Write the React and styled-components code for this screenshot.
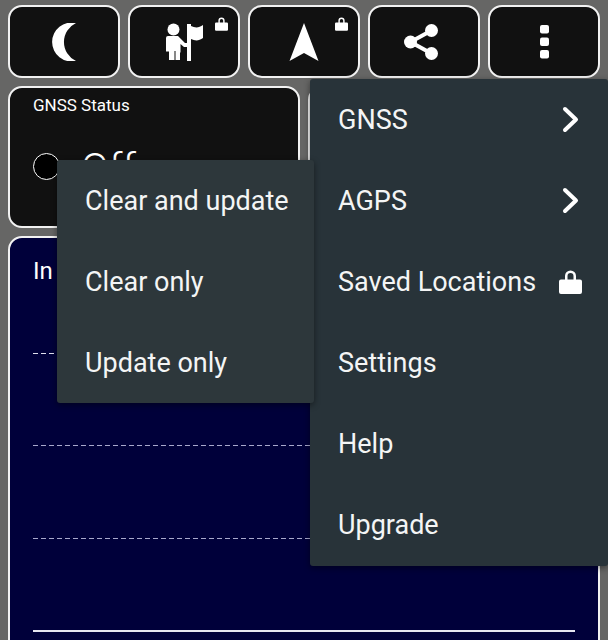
import React from "react";
import styled, { createGlobalStyle } from "styled-components";

const GlobalStyle = createGlobalStyle`
  html, body {
    margin: 0;
    height: 100%;
    overflow: hidden;
    background: #666665;
  }
  body {
    font-family: Roboto, "Liberation Sans", sans-serif;
    color: #fff;
  }
`;

const Screen = styled.div`
  position: relative;
  width: 608px;
  height: 640px;
  overflow: hidden;
  padding: 5px 8px 0;
  box-sizing: border-box;
  display: flex;
  flex-direction: column;
  gap: 8px;
`;

const Toolbar = styled.div`
  display: grid;
  grid-template-columns: repeat(5, 112px);
  gap: 8px;
`;

const ToolButton = styled.div`
  position: relative;
  height: 73px;
  box-sizing: border-box;
  display: flex;
  align-items: center;
  justify-content: center;
  background: #111111;
  border: 2px solid #f2f2f2;
  border-radius: 14px;
`;

const SmallLock = styled.svg`
  position: absolute;
  top: 10px;
  right: 10px;
  width: 13px;
  height: 14px;
  fill: #fff;
`;

const StatusRow = styled.div`
  display: grid;
  grid-template-columns: 292px 292px;
  gap: 8px;
`;

const StatusCard = styled.div`
  height: 142px;
  box-sizing: border-box;
  background: #111111;
  border: 2px solid #f2f2f2;
  border-radius: 14px;
  padding: 7px 23px;
`;

const StatusTitle = styled.div`
  font-size: 17px;
  line-height: 20px;
`;

const StatusValue = styled.div`
  display: flex;
  align-items: center;
  gap: 21px;
  margin-top: 24px;
  height: 54px;
  font-size: 41px;
  font-weight: 300;
`;

const Led = styled.div`
  width: 27px;
  height: 27px;
  box-sizing: border-box;
  border: 1px solid #fff;
  border-radius: 50%;
  background: #000;
`;

const OffLabel = styled.span`
  padding-top: 4px;
`;

const ChartCard = styled.div`
  flex: none;
  height: 460px;
  box-sizing: border-box;
  background: #00003a;
  border: 2px solid #f2f2f2;
  border-radius: 14px;
  padding: 18px 23px 0;
`;

const ChartTitle = styled.div`
  font-size: 24px;
  line-height: 30px;
  height: 30px;
`;

const ChartGrid = styled.div`
  display: flex;
  flex-direction: column;
  margin-top: 67px;
`;

const GridLine = styled.div`
  height: 1px;
  margin-bottom: ${(props) => props.$gap}px;
  background: repeating-linear-gradient(
    to right,
    ${(props) => props.$color} 0 5px,
    transparent 5px 8px
  );
`;

const AxisLine = styled.div`
  height: 2px;
  background: #e6e6f0;
`;

const Menu = styled.div`
  position: absolute;
  top: ${(props) => props.$top}px;
  left: ${(props) => props.$left}px;
  width: ${(props) => props.$width}px;
  box-sizing: border-box;
  padding-bottom: ${(props) => props.$tail}px;
  background: ${(props) => props.$bg};
  border-radius: 3px;
  box-shadow: 0 2px 6px rgba(0, 0, 0, 0.45);
  z-index: ${(props) => props.$layer};
`;

const MenuItem = styled.div`
  height: 81px;
  display: flex;
  align-items: center;
  justify-content: space-between;
  padding: 0 26px 0 28px;
  font-size: 27px;
  white-space: nowrap;
  color: #f4f5f5;
`;

const ChevronIcon = styled.svg`
  width: 17px;
  height: 27px;
  margin-right: 3px;
  fill: none;
  stroke: #fff;
  stroke-width: 4;
  stroke-linecap: round;
  stroke-linejoin: round;
`;

const MenuLock = styled.svg`
  width: 23px;
  height: 24px;
  fill: #fff;
`;

const LockPath = () => (
  <path d="M6 9.500V6a5.500 5.500 0 0 1 11 0v3.500h4a2 2 0 0 1 2 2V22a2 2 0 0 1-2 2H2a2 2 0 0 1-2-2V11.500a2 2 0 0 1 2-2zm2.500 0h6V6a3 3 0 0 0-6 0z" />
);

const Chevron = () => (
  <ChevronIcon viewBox="0 0 17 27">
    <path d="M3 3l11 10.500L3 24" />
  </ChevronIcon>
);

const App = () => {
  return (
    <>
      <GlobalStyle />
      <Screen>
        <Toolbar>
          <ToolButton>
            <svg width="24" height="38" viewBox="0 0 24 38" fill="#fff">
              <path d="M24 0A19.500 19.500 0 1 0 24 38A21 21 0 0 1 24 0z" />
            </svg>
          </ToolButton>
          <ToolButton>
            <svg width="37" height="38" viewBox="0 0 37 38" fill="#fff">
              <circle cx="7.500" cy="6.500" r="6" />
              <path d="M0 15q0-2 2-2h10l7 7h2v4h-3l-3.500-3v8.500H14V37H9.500V28h-1v9H3V28.500H0z" />
              <path d="M21 1h4v37h-4z" />
              <path d="M25 3c4 2 8 2 12-1v13c-4 3-8 3-12 1z" />
            </svg>
            <SmallLock viewBox="0 0 23 24"><LockPath /></SmallLock>
          </ToolButton>
          <ToolButton>
            <svg width="30" height="38" viewBox="0 0 30 38" fill="#fff">
              <path d="M15 0l14.500 38L15 30 .5 38z" />
            </svg>
            <SmallLock viewBox="0 0 23 24"><LockPath /></SmallLock>
          </ToolButton>
          <ToolButton>
            <svg width="34" height="36" viewBox="0 0 34 36" fill="#fff" style={{ marginRight: 6 }}>
              <circle cx="27.500" cy="6.500" r="6.500" />
              <circle cx="6.500" cy="18" r="6.500" />
              <circle cx="27.500" cy="29.500" r="6.500" />
              <path d="M27.500 6.500L6.500 18l21 11.500" stroke="#fff" strokeWidth="4" fill="none" />
            </svg>
          </ToolButton>
          <ToolButton>
            <svg width="9" height="34" viewBox="0 0 9 34" fill="#fff">
              <rect x="0" y="0" width="9" height="8.500" rx="2" />
              <rect x="0" y="12.500" width="9" height="8.500" rx="2" />
              <rect x="0" y="25" width="9" height="8.500" rx="2" />
            </svg>
          </ToolButton>
        </Toolbar>

        <StatusRow>
          <StatusCard>
            <StatusTitle>GNSS Status</StatusTitle>
            <StatusValue>
              <Led />
              <OffLabel>Off</OffLabel>
            </StatusValue>
          </StatusCard>
          <StatusCard />
        </StatusRow>

        <ChartCard>
          <ChartTitle>In</ChartTitle>
          <ChartGrid>
            <GridLine $gap={91} $color="#e0e0ee" />
            <GridLine $gap={92} $color="#a8a8cc" />
            <GridLine $gap={91} $color="#a8a8cc" />
            <AxisLine />
          </ChartGrid>
        </ChartCard>

        <Menu $top={160} $left={57} $width={257} $bg="#2d373b" $layer={3} $tail={0}>
          <MenuItem>Clear and update</MenuItem>
          <MenuItem>Clear only</MenuItem>
          <MenuItem>Update only</MenuItem>
        </Menu>

        <Menu $top={79} $left={310} $width={298} $bg="#283339" $layer={2} $tail={1}>
          <MenuItem>
            GNSS
            <Chevron />
          </MenuItem>
          <MenuItem>
            AGPS
            <Chevron />
          </MenuItem>
          <MenuItem>
            Saved Locations
            <MenuLock viewBox="0 0 23 24"><LockPath /></MenuLock>
          </MenuItem>
          <MenuItem>Settings</MenuItem>
          <MenuItem>Help</MenuItem>
          <MenuItem>Upgrade</MenuItem>
        </Menu>
      </Screen>
    </>
  );
};

export default App;
